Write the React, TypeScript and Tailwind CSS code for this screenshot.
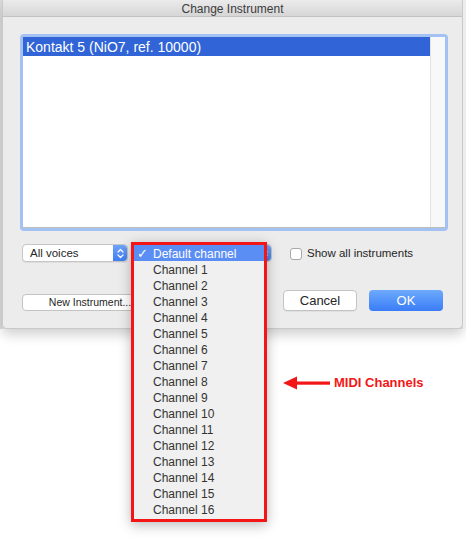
import React from 'react'

const channels = Array.from({ length: 16 }, (_, i) => `Channel ${i + 1}`)

// little up/down arrows on the blue end of a mac popup button
function Stepper({ className = '' }: { className?: string }) {
  return (
    <div
      className={`flex h-full w-[14px] items-center justify-center rounded-r-[4px] bg-gradient-to-b from-[#6ea3fa] to-[#3f7ef2] ${className}`}
    >
      <svg width="7" height="11" viewBox="0 0 7 11" fill="none">
        <path d="M1 4 L3.5 1.5 L6 4" stroke="white" strokeWidth="1.3" strokeLinecap="round" strokeLinejoin="round" />
        <path d="M1 7 L3.5 9.5 L6 7" stroke="white" strokeWidth="1.3" strokeLinecap="round" strokeLinejoin="round" />
      </svg>
    </div>
  )
}

export default function App() {
  return (
    <div
      className="relative h-[538px] w-[466px] overflow-hidden bg-white"
      style={{ fontFamily: '"Liberation Sans", Arial, sans-serif' }}
    >
      {/* background window strips + sheet */}
      <div className="flex bg-[#e9e9e9]">
        <div className="w-[2px] bg-[#dcdcdc]" />
        <div className="flex h-[329px] w-[461px] flex-col rounded-b-[5px] border-x border-b border-[#c9c9c9] bg-[#ececec] shadow-[0_6px_12px_rgba(0,0,0,0.18)]">
          {/* title bar */}
          <div className="flex h-[17px] items-center justify-center border-b border-[#c2c2c2] bg-gradient-to-b from-[#ebebeb] to-[#d6d6d6] pt-[1px] text-[12px] text-[#3c3c3c]">
            Change Instrument
          </div>

          {/* instrument list */}
          <div className="ml-[17px] mt-[17px] h-[197px] w-[428px] rounded-[4px] bg-[#a3c1f2] p-[3px]">
            <div className="flex h-full border-b border-[#bdbdbd] bg-white">
              <div className="flex-1">
                <div className="flex h-[19px] items-center bg-[#3064d7] pl-[3px] pt-[1px] text-[14px] text-white">
                  Kontakt 5 (NiO7, ref. 10000)
                </div>
              </div>
              <div className="w-[15px] border-l border-[#e2e2e2] bg-[#f8f8f8]" />
            </div>
          </div>

          {/* popups + checkbox */}
          <div className="ml-[19px] mt-[13px] flex h-[18px] items-center">
            <div className="flex h-[18px] w-[106px] items-center rounded-[4px] border border-[#c6c6c6] bg-white shadow-[0_1px_0_rgba(0,0,0,0.06)]">
              <span className="flex-1 pl-[7px] pt-[1px] text-[11.5px] text-[#262626]">All voices</span>
              <Stepper />
            </div>
            {/* channel popup, covered by its open menu */}
            <div className="ml-[5px] flex h-[18px] w-[139px] items-center rounded-[4px] border border-[#c6c6c6] bg-white">
              <span className="flex-1" />
              <Stepper />
            </div>
            <div className="ml-[18px] mt-[2px] h-[12px] w-[12px] rounded-[3px] border border-[#a9a9a9] bg-white" />
            <span className="ml-[5px] pt-[2px] text-[11.5px] text-[#262626]">Show all instruments</span>
          </div>

          {/* buttons */}
          <div className="ml-[19px] mr-[19px] mt-[28px] flex h-[21px] items-end">
            <div className="flex h-[17px] w-[136px] items-center justify-center rounded-[4px] border border-[#c3c3c3] bg-white text-[10.5px] text-[#262626]">
              New Instrument...
            </div>
            <div className="flex-1" />
            <div className="flex h-[21px] w-[74px] items-center justify-center rounded-[4px] border border-[#c3c3c3] bg-white text-[13px] text-[#262626] shadow-[0_1px_0_rgba(0,0,0,0.05)]">
              Cancel
            </div>
            <div className="ml-[12px] flex h-[21px] w-[74px] items-center justify-center rounded-[4px] bg-gradient-to-b from-[#6eaafc] to-[#3a7cf6] text-[13px] text-white">
              OK
            </div>
          </div>
        </div>
        <div className="w-[3px] bg-[#ededed]" />
      </div>

      {/* open channel menu, outlined in red */}
      <div className="absolute left-[131px] top-[242px] h-[280px] w-[136px] border-[3px] border-[#f41616] bg-[#f0f0f0] shadow-[0_3px_12px_rgba(0,0,0,0.28)]">
        <div className="flex h-[16px] items-center bg-[#5b8ef5] pt-[1px] text-[12px] text-white">
          <span
            className="w-[19px] pl-[3px] text-[13px] font-bold leading-none"
            style={{ fontFamily: '"DejaVu Sans", sans-serif' }}
          >
            ✓
          </span>
          <span>Default channel</span>
        </div>
        {channels.map((c) => (
          <div key={c} className="flex h-[16px] items-center pl-[19px] pt-[1px] text-[12px] text-[#333]">
            {c}
          </div>
        ))}
      </div>

      {/* annotation */}
      <div className="absolute left-[283px] top-[376px] flex h-[14px] items-center">
        <svg width="48" height="14" viewBox="0 0 48 14">
          <polygon points="0,7 14,0.5 14,13.5" fill="#f41616" />
          <rect x="13" y="5.5" width="34" height="3.2" fill="#f41616" />
        </svg>
        <span className="ml-[3px] text-[13px] font-bold text-[#f41616]">MIDI Channels</span>
      </div>
    </div>
  )
}
